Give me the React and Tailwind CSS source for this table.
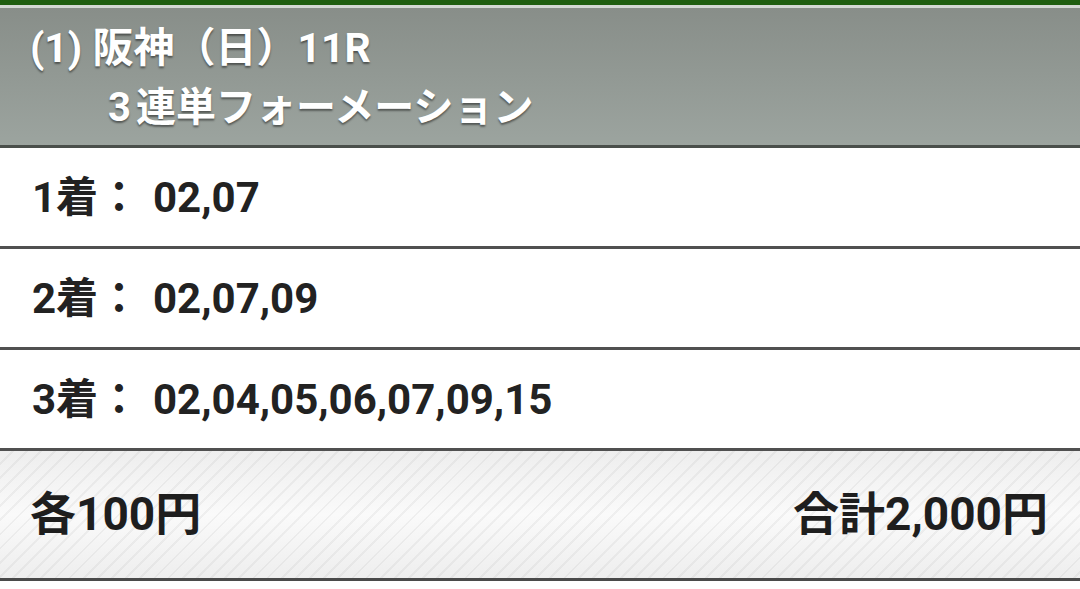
const rows = [
    { label: "1着：", value: "02,07" },
    { label: "2着：", value: "02,07,09" },
    { label: "3着：", value: "02,04,05,06,07,09,15" },
];

export default function App() {
    return (
        <div className="w-[1080px] min-h-[589px] bg-white font-['Roboto','Noto_Sans_CJK_JP',sans-serif] font-bold">
            <div className="h-[5px] bg-[#1f5e10]" />
            <div className="h-[3px] bg-[#d4d8d4]" />
            <div className="h-[137px] bg-gradient-to-b from-[#888e89] to-[#9ca49f] pt-[10px] pl-[30px] text-white leading-[60px] [text-shadow:0_2px_2px_rgba(0,0,0,0.45)]">
                <div className="text-[41px]">(1) 阪神（日）11R</div>
                <div className="pl-[78px] text-[40px]">
                    <span className="mr-[5px]">3</span>連単フォーメーション
                </div>
            </div>
            <div className="h-[3px] bg-[#4a4f4b]" />
            {rows.map((r) => (
                <div key={r.label} className="h-[101px] flex items-center px-[32px] border-b-[3px] border-[#505050] text-[42px] text-[#222]">
                    <span className="w-[121px]">{r.label}</span>
                    <span>{r.value}</span>
                </div>
            ))}
            <div className="h-[130px] flex items-center justify-between pl-[30px] pr-[32px] border-b-[3px] border-[#4a4a4a] text-[46px] text-[#1e1e1e] bg-[repeating-linear-gradient(135deg,transparent_0px,transparent_8px,rgba(0,0,0,0.045)_8px,rgba(0,0,0,0.045)_10px),linear-gradient(to_bottom,#eeeeee,#fafafa_50%,#eeeeee)]">
                <span>各100円</span>
                <span>合計2,000円</span>
            </div>
        </div>
    );
}
